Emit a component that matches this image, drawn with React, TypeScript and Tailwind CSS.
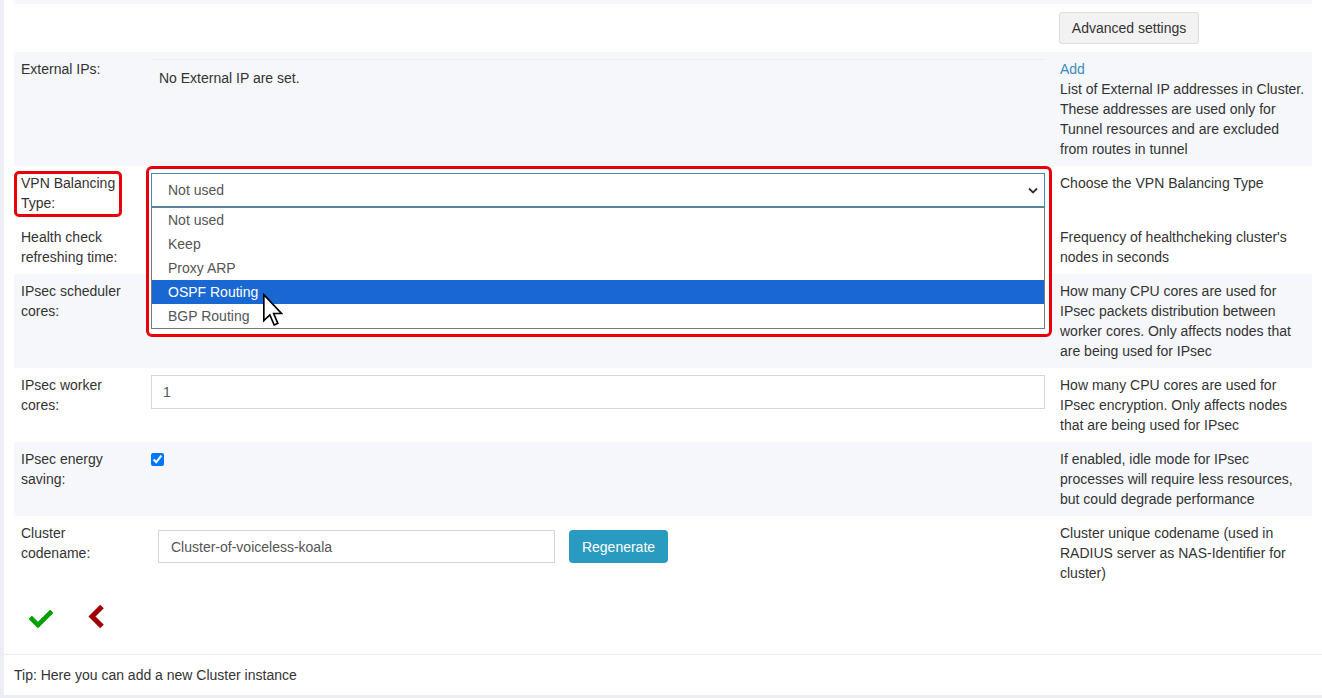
import { FaCheck } from "react-icons/fa";

const font = { fontFamily: '"Liberation Sans", Arial, sans-serif' };

const options = ["Not used", "Keep", "Proxy ARP", "OSPF Routing", "BGP Routing"];

function Row({
  label,
  shaded,
  children,
  help,
  labelBoxed,
  middleClass = "",
}: {
  label: string;
  shaded?: boolean;
  children?: React.ReactNode;
  help: React.ReactNode;
  labelBoxed?: boolean;
  middleClass?: string;
}) {
  return (
    <div className={`grid grid-cols-[130px_908px_260px] ${shaded ? "bg-[#f5f7fa]" : "bg-white"}`}>
      <div className="relative pl-[7px] pr-[12px] py-[7px]">
        {labelBoxed ? (
          <div className="absolute left-0 top-[5px] h-[46px] w-[108px] rounded-[5px] border-[3px] border-[#e8000b]" />
        ) : null}
        <span className="relative">{label}</span>
      </div>
      <div className={`relative p-[7px] ${middleClass}`}>{children}</div>
      <div className="pl-[8px] pr-[4px] py-[7px]">{help}</div>
    </div>
  );
}

function Cursor() {
  return (
    <svg width="22" height="35" viewBox="0 0 13 21" className="absolute left-[118px] top-[127px] z-30">
      <path
        d="M1 1 L1 16.5 L4.6 13.1 L7.2 19.2 L9.4 18.2 L6.9 12.3 L11.6 12.3 Z"
        fill="#fff"
        stroke="#000"
        strokeWidth="1"
        strokeLinejoin="miter"
      />
    </svg>
  );
}

export default function App() {
  return (
    <div className="flex h-[698px] w-[1322px] bg-[#eceef3] text-[14px] leading-[20px] text-[#333]" style={font}>
      <div className="ml-[4px] flex h-[695px] flex-1 flex-col bg-white">
        <div className="px-[10px]">
          <div className="h-[4px] bg-[#f5f7fa]" />
          <div className="grid grid-cols-[130px_908px_260px] bg-white">
            <div />
            <div />
            <div className="py-[8px] pl-[7px]">
              <button className="h-[32px] w-[140px] rounded-[3px] border border-[#dcdcdc] bg-[#f2f2f2] text-[14px] text-[#333]">
                Advanced settings
              </button>
            </div>
          </div>

          <Row
            label="External IPs:"
            shaded
            help={
              <div>
                <a className="text-[#3c8dbc]">Add</a>
                <p>
                  List of External IP addresses in Cluster. These addresses are used only for Tunnel resources and
                  are excluded from routes in tunnel
                </p>
              </div>
            }
          >
            <div className="border-t border-[#eceff2] p-[8px]">No External IP are set.</div>
          </Row>

          <div className="relative z-20">
            <Row
              label="VPN Balancing Type:"
              labelBoxed
              help={<p>Choose the VPN Balancing Type</p>}
            >
              <div className="absolute left-[2px] right-0 top-0 h-[171px] rounded-[6px] border-[3px] border-[#e8000b] bg-white" />
              <div className="relative flex h-[34px] items-center justify-between border border-[#3c8dbc] bg-white pl-[16px] pr-[6px] text-[#555]">
                <span>Not used</span>
                <svg width="10" height="7" viewBox="0 0 10 7">
                  <path d="M1 1.5 L5 5.5 L9 1.5" fill="none" stroke="#333" strokeWidth="1.8" />
                </svg>
              </div>
              <div className="absolute left-[7px] right-[7px] top-[41px] border border-[#7a7a7a] bg-white">
                {options.map((o) => (
                  <div
                    key={o}
                    className={`h-[24px] pl-[16px] leading-[24px] ${
                      o === "OSPF Routing" ? "bg-[#1967d2] text-white" : "text-[#555]"
                    }`}
                  >
                    {o}
                  </div>
                ))}
              </div>
              <Cursor />
            </Row>
          </div>

          <Row label="Health check refreshing time:" help={<p>Frequency of healthcheking cluster's nodes in seconds</p>}>
            <div className="h-[34px] border border-[#d2d6de]" />
          </Row>

          <Row
            label="IPsec scheduler cores:"
            shaded
            help={
              <p>
                How many CPU cores are used for IPsec packets distribution between worker cores. Only affects nodes
                that are being used for IPsec
              </p>
            }
          >
            <div className="h-[34px] border border-[#d2d6de] bg-white" />
          </Row>

          <Row
            label="IPsec worker cores:"
            help={
              <p>How many CPU cores are used for IPsec encryption. Only affects nodes that are being used for IPsec</p>
            }
          >
            <div className="flex h-[34px] items-center border border-[#d2d6de] pl-[11px] text-[#555]">1</div>
          </Row>

          <Row
            label="IPsec energy saving:"
            shaded
            help={<p>If enabled, idle mode for IPsec processes will require less resources, but could degrade performance</p>}
          >
            <input type="checkbox" defaultChecked className="m-0 mt-[4px] block h-[13px] w-[13px] accent-[#0075ff]" />
          </Row>

          <Row
            label="Cluster codename:"
            help={<p>Cluster unique codename (used in RADIUS server as NAS-Identifier for cluster)</p>}
          >
            <div className="flex items-center gap-[14px] p-[7px]">
              <div className="flex h-[33px] w-[397px] items-center border border-[#d2d6de] pl-[12px] text-[#555]">
                Cluster-of-voiceless-koala
              </div>
              <button className="h-[33px] w-[99px] rounded-[4px] bg-[#2a9bc0] text-[14px] text-white">
                Regenerate
              </button>
            </div>
          </Row>

          <div className="flex h-[64px] items-start gap-[34px] pl-[15px] pt-[14px]">
            <FaCheck className="mt-[3px] text-[#00a000]" size={24} />
            <svg width="18" height="25" viewBox="0 0 18 25" className="text-[#a00000]">
              <path d="M15 2.5 L5 12.5 L15 22.5" fill="none" stroke="currentColor" strokeWidth="5" strokeLinejoin="miter" />
            </svg>
          </div>
        </div>

        <div className="border-t border-[#eeeeee] px-[10px] pt-[10px]">Tip: Here you can add a new Cluster instance</div>
      </div>
    </div>
  );
}
